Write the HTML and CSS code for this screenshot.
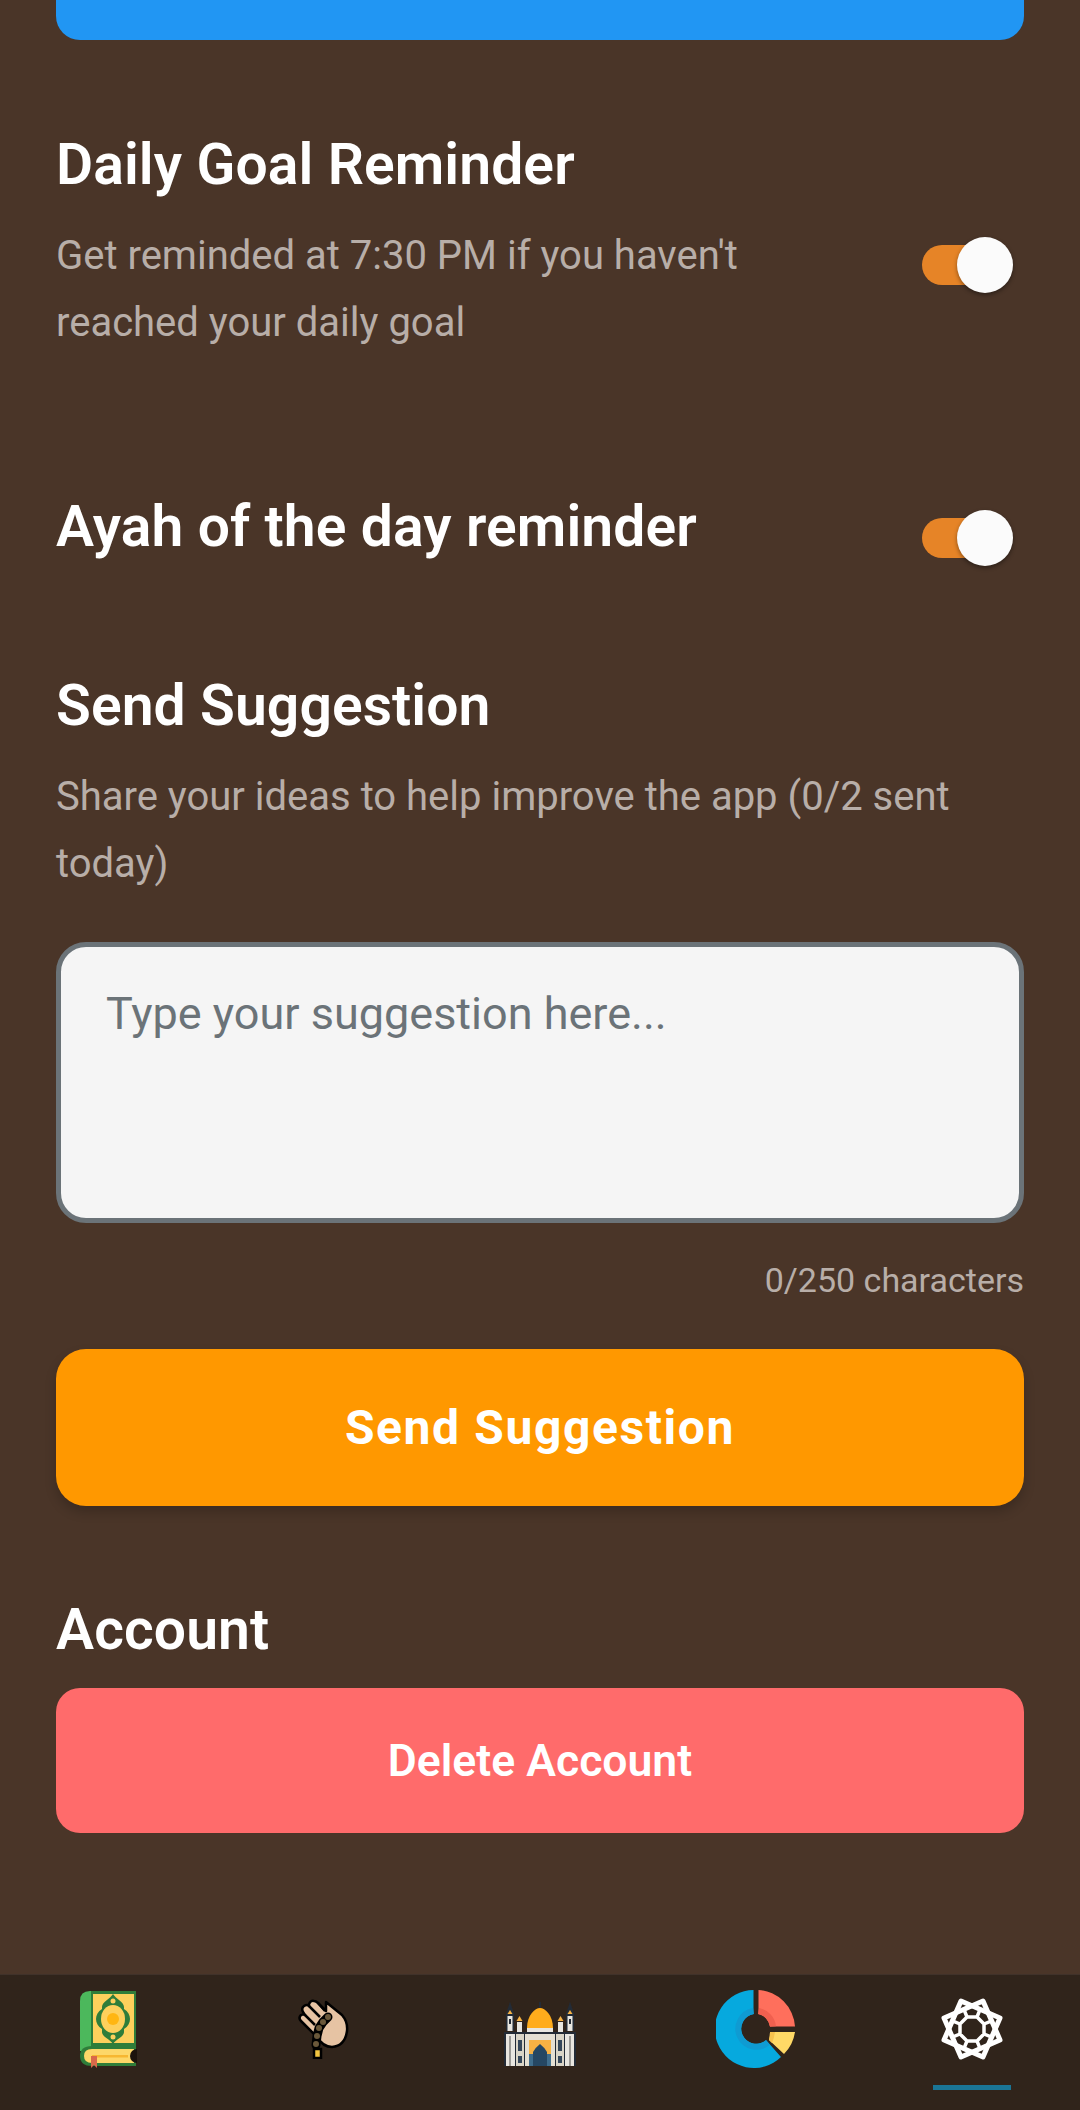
FILE: index.html
```html
<!DOCTYPE html>
<html lang="en">

<head>
    <meta charset="utf-8">
    <meta name="viewport" content="width=device-width, initial-scale=1.0">
    <title>Settings</title>
    <link rel="stylesheet" href="styles.css">
</head>

<body>
    <main class="content">
        <div class="top-button"></div>

        <section class="goal">
            <div class="row">
                <div class="row-text">
                    <h2 class="title">Daily Goal Reminder</h2>
                    <p class="desc desc-narrow">Get reminded at 7:30 PM if you haven't reached your daily goal</p>
                </div>
                <div class="toggle toggle-goal"><span class="knob"></span></div>
            </div>
        </section>

        <section class="ayah">
            <div class="row">
                <h2 class="title">Ayah of the day reminder</h2>
                <div class="toggle toggle-ayah"><span class="knob"></span></div>
            </div>
        </section>

        <section class="suggest">
            <h2 class="title">Send Suggestion</h2>
            <p class="desc">Share your ideas to help improve the app (0/2 sent today)</p>
            <textarea class="suggest-input" placeholder="Type your suggestion here..."></textarea>
            <div class="counter">0/250 characters</div>
            <button class="btn-send">Send Suggestion</button>
        </section>

        <section class="account">
            <h2 class="title">Account</h2>
            <button class="btn-delete">Delete Account</button>
        </section>
    </main>

    <nav class="tabs">
        <div class="tab">
            <svg class="icon" width="57" height="77" viewBox="0 0 57 77">
                <path d="M10 0H56V60H0V10Q0 0 10 0Z" fill="#4cb85c" />
                <rect x="11" y="0" width="45" height="56" fill="#2f7d3a" />
                <rect x="13" y="3" width="41" height="49" fill="#fdd05c" />
                <path d="M33 3C36 8 44 11 44 16V18C52 23 52 33 44 38V41C44 46 36 48 33 53C30 48 22 46 22 41V38C14 33 14 23 22 18V16C22 11 30 8 33 3Z" fill="#2f7d3a" />
                <ellipse cx="33" cy="28" rx="12" ry="14" fill="#fdd05c" />
                <circle cx="33" cy="28" r="6" fill="#ffb612" />
                <circle cx="33" cy="10" r="2.500" fill="#fdd05c" />
                <circle cx="33" cy="46" r="2.500" fill="#fdd05c" />
                <path d="M12 55H56V75H12Q0 75 0 65Q0 55 12 55Z" fill="#2f7d3a" />
                <path d="M12 58H54V72H12Q4 72 4 65Q4 58 12 58Z" fill="#fdd768" />
                <rect x="12" y="64" width="36" height="2.500" fill="#f7b731" />
                <circle cx="57" cy="65" r="7" fill="#1c130d" />
                <path d="M11 65H17V77L14 74L11 77Z" fill="#d9694a" />
            </svg>
        </div>
        <div class="tab">
            <svg class="icon" width="52" height="60" viewBox="0 0 52 60">
                <path d="M28 3L44 16Q50 23 49 32Q47 47 34 48Q25 48 19 38L3 22Q0 19 3 16Q5 15 7 16L5 13Q3 9 6 7Q9 5 11 7L11 5Q13 1 16 2Q18 2 20 4L28 12Z" fill="#e6c3a3" stroke="#000" stroke-width="2.500" stroke-linejoin="round" />
                <path d="M7 16L17 26M11 7L22 18M20 4L27 12" stroke="#000" stroke-width="2.500" fill="none" />
                <path d="M30 18L25 23L21 29L19 37L18 46" stroke="#000" stroke-width="9" stroke-linecap="round" stroke-linejoin="round" fill="none" />
                <circle cx="30" cy="18" r="3" fill="#6a583a" />
                <circle cx="25" cy="23" r="3" fill="#6a583a" />
                <circle cx="21" cy="29" r="3" fill="#6a583a" />
                <circle cx="19" cy="37" r="3" fill="#6a583a" />
                <circle cx="18" cy="45" r="3" fill="#6a583a" />
                <rect x="16" y="50" width="7" height="9" fill="#f2c440" stroke="#000" stroke-width="2.500" />
            </svg>
        </div>
        <div class="tab">
            <svg class="icon" width="72" height="74" viewBox="0 -10 72 74">
                <rect x="0" y="30" width="72" height="34" fill="#232b36" />
                <path d="M3 12L6 3L9 12V28H3Z" fill="#232b36" stroke="#232b36" stroke-width="2" />
                <path d="M63 12L66 3L69 12V28H63Z" fill="#232b36" stroke="#232b36" stroke-width="2" />
                <rect x="3.500" y="14" width="5" height="15" fill="#e8e6e0" />
                <rect x="63.500" y="14" width="5" height="15" fill="#e8e6e0" />
                <rect x="5" y="17" width="2" height="5" fill="#232b36" />
                <rect x="65" y="17" width="2" height="5" fill="#232b36" />
                <path d="M3.500 12L6 8L8.500 12Z" fill="#f7b244" />
                <path d="M63.500 12L66 8L68.500 12Z" fill="#f7b244" />
                <rect x="13" y="20" width="5" height="10" fill="#e8e6e0" />
                <rect x="54" y="20" width="5" height="10" fill="#e8e6e0" />
                <path d="M12.500 19L15.500 14L18.500 19Z" fill="#f7b244" />
                <path d="M53.500 19L56.500 14L59.500 19Z" fill="#f7b244" />
                <path d="M36 0V6" stroke="#232b36" stroke-width="2" />
                <path d="M23 26C23 13 31 6 36 6C41 6 49 13 49 26Z" fill="#ffac1c" />
                <rect x="23" y="26" width="26" height="4" fill="#e8e6e0" />
                <rect x="2" y="32" width="9" height="32" fill="#e8e6e0" />
                <rect x="61" y="32" width="9" height="32" fill="#e8e6e0" />
                <rect x="5" y="34" width="2" height="30" fill="#9b9a96" />
                <rect x="65" y="34" width="2" height="30" fill="#9b9a96" />
                <rect x="12" y="32" width="8" height="32" fill="#d9d4c6" />
                <rect x="52" y="32" width="8" height="32" fill="#d9d4c6" />
                <rect x="14" y="38" width="4" height="11" fill="#35475a" />
                <rect x="54" y="38" width="4" height="11" fill="#35475a" />
                <rect x="14" y="54" width="4" height="7" fill="#35475a" />
                <rect x="54" y="54" width="4" height="7" fill="#35475a" />
                <rect x="21" y="32" width="30" height="32" fill="#e4dfd2" />
                <rect x="25" y="38" width="22" height="26" fill="#f7b244" />
                <rect x="25" y="52" width="22" height="12" fill="#3f6d8c" />
                <path d="M29 64V50Q32 45 36 42Q40 45 43 50V64Z" fill="#254763" />
            </svg>
        </div>
        <div class="tab">
            <svg class="icon" width="80" height="80" viewBox="0 0 80 80">
                <path d="M37.500 1V25A15 15 0 1 0 50 51L65 68A39 39 0 1 1 37.500 1Z" fill="#06a9de" />
                <path d="M37.500 22A18 18 0 1 0 52 53.500" fill="none" stroke="#0f9bd2" stroke-width="6" />
                <path d="M42.500 1A39 39 0 0 1 79 37.500H54A15 15 0 0 0 42.500 25Z" fill="#ff6f5c" />
                <path d="M42.500 22A18 18 0 0 1 57 37.500" fill="none" stroke="#f0604f" stroke-width="6" />
                <path d="M54 43H79A39 39 0 0 1 68 65L53 51Q54 47 54 43Z" fill="#ffd966" />
                <path d="M54 43H59Q58 50 56 54L53 51Q54 47 54 43Z" fill="#f7c24e" />
            </svg>
        </div>
        <div class="tab tab-active">
            <svg class="icon" width="66" height="66" viewBox="-33 -33 66 66">
                <polygon class="star" points="11,-28 28,11 -11,28 -28,-11" />
                <polygon class="star" points="-11,-28 28,-11 11,28 -28,11" />
                <polygon class="star star-inner" points="5,-12 12,-5 12,5 5,12 -5,12 -12,5 -12,-5 -5,-12" />
                <path class="star star-inner" d="M5 -12L8.400 -20.300M12 -5L20.300 -8.400M12 5L20.300 8.400M5 12L8.400 20.300M-5 12L-8.400 20.300M-12 5L-20.300 8.400M-12 -5L-20.300 -8.400M-5 -12L-8.400 -20.300" />
            </svg>
        </div>
    </nav>
</body>

</html>
```

FILE: styles.css
```css
* {
    box-sizing: border-box;
}

html,
body {
    margin: 0;
    height: 2110px;
    overflow: hidden;
}

body {
    display: flex;
    flex-direction: column;
    background: #4a3528;
    color: #fff;
    font-family: Roboto, "Liberation Sans", sans-serif;
}

.content {
    flex: 1;
    padding: 0 56px;
    overflow: hidden;
}

.top-button {
    height: 40px;
    background: #2196f3;
    border-radius: 0 0 24px 24px;
}

.title {
    margin: 0;
    font-size: 57px;
    font-weight: 600;
    line-height: 62px;
    letter-spacing: 0.100px;
}

.desc {
    margin: 26px 0 0;
    font-size: 40px;
    line-height: 67px;
    color: #b8aea8;
}

.desc-narrow {
    max-width: 720px;
}

.row {
    display: flex;
    justify-content: space-between;
    align-items: flex-start;
}

.goal {
    margin-top: 94px;
}

.ayah {
    margin-top: 140px;
}

.suggest {
    margin-top: 117px;
}

.toggle {
    display: flex;
    justify-content: flex-end;
    align-items: center;
    width: 81px;
    height: 40px;
    margin-right: 21px;
    border-radius: 20px;
    background: #e68427;
}

.toggle-goal {
    margin-top: 111px;
}

.toggle-ayah {
    margin-top: 22px;
}

.knob {
    width: 56px;
    height: 56px;
    margin-right: -10px;
    flex: none;
    border-radius: 50%;
    background: #fbfbfb;
    box-shadow: 0 2px 4px rgba(0, 0, 0, 0.4);
}

.suggest-input {
    display: block;
    width: 100%;
    height: 281px;
    margin-top: 45px;
    padding: 40px 45px;
    border: 5px solid #6b7378;
    border-radius: 30px;
    background: #f5f5f5;
    font-family: inherit;
    font-size: 45px;
    resize: none;
    outline: none;
}

.suggest-input::placeholder {
    color: #6b7378;
    opacity: 1;
}

.counter {
    margin-top: 38px;
    font-size: 34px;
    line-height: 38px;
    text-align: right;
    color: #b8aea8;
}

.btn-send {
    display: block;
    width: 100%;
    height: 157px;
    margin-top: 50px;
    border: 0;
    border-radius: 30px;
    background: #ff9800;
    box-shadow: 0 6px 12px rgba(0, 0, 0, 0.2);
    color: #fff;
    font-family: inherit;
    font-size: 48px;
    font-weight: 700;
    letter-spacing: 1.600px;
}

.account {
    margin-top: 93px;
}

.btn-delete {
    display: block;
    width: 100%;
    height: 145px;
    margin-top: 27px;
    border: 0;
    border-radius: 24px;
    background: #ff6b6b;
    color: #fff;
    font-family: inherit;
    font-size: 44.500px;
    font-weight: 600;
}

.tabs {
    display: flex;
    height: 136px;
    flex: none;
    background: #30241b;
    border-top: 1px solid #40322a;
}

.tab {
    flex: 1;
    display: flex;
    justify-content: center;
    align-items: center;
    height: 80px;
    margin-top: 14px;
}

.tab-active {
    position: relative;
}

.tab-active::after {
    content: "";
    position: absolute;
    top: 96px;
    left: 50%;
    width: 78px;
    height: 5px;
    margin-left: -39px;
    background: #1a7596;
}

.star {
    fill: none;
    stroke: #fff;
    stroke-width: 5;
    stroke-linejoin: round;
}

.star-inner {
    stroke-width: 3.500;
}
```
